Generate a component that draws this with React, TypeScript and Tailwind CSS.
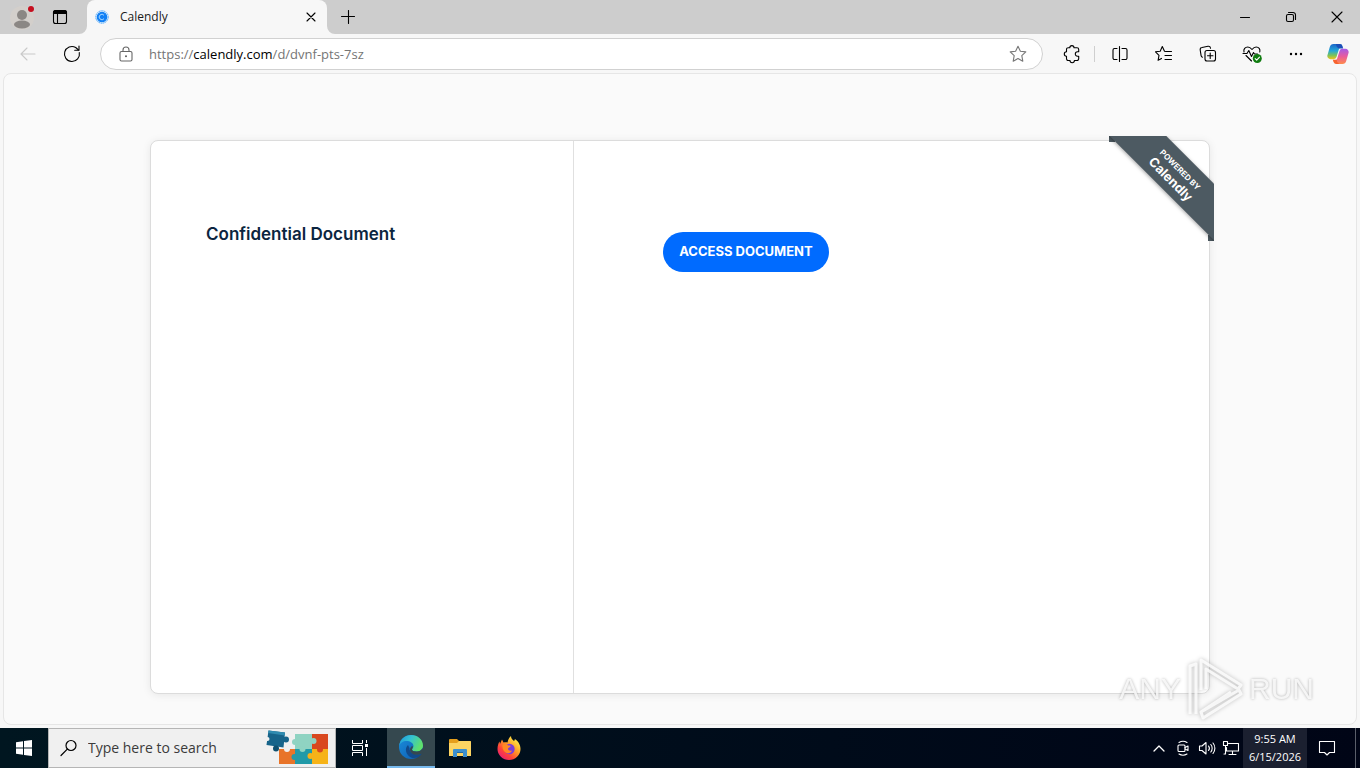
import type { ReactNode } from 'react';

interface IconButtonProps {
  label: string;
  className?: string;
  children: ReactNode;
}

function IconButton({ label, className = 'w-11 h-8', children }: IconButtonProps) {
  return (
    <button type="button" aria-label={label} className={`flex flex-shrink-0 items-center justify-center ${className}`}>
      {children}
    </button>
  );
}

interface LineIconProps {
  size?: number;
  className?: string;
  children: ReactNode;
}

function LineIcon({ size = 20, className = 'text-[#1b1b1b]', children }: LineIconProps) {
  return (
    <svg
      width={size}
      height={size}
      viewBox={`0 0 ${size} ${size}`}
      fill="none"
      stroke="currentColor"
      strokeWidth="1.1"
      strokeLinecap="round"
      strokeLinejoin="round"
      className={className}
      aria-hidden="true"
    >
      {children}
    </svg>
  );
}

function CalendlyIcon() {
  return (
    <svg width="14" height="14" viewBox="0 0 14 14" fill="none" aria-hidden="true">
      <circle cx="7" cy="7" r="6.2" stroke="#4aa8ff" strokeWidth="1" strokeDasharray="1.8 .5" />
      <circle cx="7" cy="7" r="4.6" fill="#1180f5" stroke="#1180f5" strokeWidth="1.4" />
      <path d="M9 5.300A2.700 2.700 0 1 0 9 8.700" stroke="#a8d8ff" strokeWidth="1" />
    </svg>
  );
}

function CopilotIcon() {
  return (
    <svg width="22" height="22" viewBox="0 0 22 22" aria-hidden="true">
      <defs>
        <linearGradient id="copilotLeft" x1="0" y1="0" x2="0" y2="1">
          <stop offset="0" stopColor="#1b66c9" />
          <stop offset=".45" stopColor="#24a8d8" />
          <stop offset=".75" stopColor="#7cc35a" />
          <stop offset="1" stopColor="#f2c41d" />
        </linearGradient>
        <linearGradient id="copilotRight" x1="0" y1="0" x2="0" y2="1">
          <stop offset="0" stopColor="#a45be8" />
          <stop offset=".5" stopColor="#e95b9c" />
          <stop offset="1" stopColor="#ff8b4a" />
        </linearGradient>
      </defs>
      <path
        d="M15.500 3.200A3 3 0 0 0 12.700 1H6.600A4 4 0 0 0 2.800 4L.5 12a3.200 3.200 0 0 0 3 4.200h3.200a3 3 0 0 0 2.800-2.200L11.800 6.500a3 3 0 0 1 2.800-2.200z"
        fill="url(#copilotLeft)"
      />
      <path d="M9 1h3.700a3 3 0 0 1 2.800 2.200l.7 2.300h-4A5 5 0 0 1 9 1z" fill="#1c4fb8" />
      <path
        d="M6.500 18.800A3 3 0 0 0 9.300 21h6.100a4 4 0 0 0 3.800-3l2.300-8a3.200 3.200 0 0 0-3-4.200h-3.200a3 3 0 0 0-2.800 2.200l-2.300 7.500a3 3 0 0 1-2.800 2.200z"
        fill="url(#copilotRight)"
      />
      <path d="M6.500 18.800A3 3 0 0 0 9.300 21h2.900a4.600 4.600 0 0 1-2.500-4.300H5.800z" fill="#f7632f" />
    </svg>
  );
}

function PuzzleArt() {
  return (
    <svg width="64" height="38" viewBox="0 0 64 38" className="flex-shrink-0" aria-hidden="true">
      <path d="M29 5h17v15H29z" fill="#8fd3c2" />
      <path d="M46 5h16v16H46z" fill="#d9481f" />
      <path d="M13 20h17v15H13z" fill="#e87429" />
      <path d="M29 20h17v15H29z" fill="#219aa8" />
      <path d="M46 20h16v15H46z" fill="#f6b318" />
      <circle cx="29" cy="13" r="3" fill="#8fd3c2" />
      <circle cx="47.500" cy="12" r="3" fill="#8fd3c2" />
      <circle cx="36.500" cy="20" r="3" fill="#8fd3c2" />
      <circle cx="54" cy="20.500" r="3" fill="#d9481f" />
      <circle cx="28.500" cy="28" r="3" fill="#219aa8" />
      <circle cx="44.500" cy="27" r="3" fill="#f6b318" />
      <circle cx="21" cy="20" r="3" fill="#f0f0f0" />
      <path d="M2.500 1.500L19 3.500l-1.500 15L.5 16z" fill="#17648a" />
      <path d="M2.500 1.500L19 3.500l-.3 3L2.200 4z" fill="#2f8bb0" />
      <circle cx="20" cy="10.500" r="3" fill="#17648a" />
      <circle cx="10" cy="19.500" r="3" fill="#10506f" />
      <circle cx="1.500" cy="10" r="2" fill="#f0f0f0" />
    </svg>
  );
}

function EdgeIcon() {
  return (
    <svg width="26" height="26" viewBox="0 0 26 26" aria-hidden="true">
      <defs>
        <linearGradient id="edgeTop" x1="0" y1="0" x2="1" y2=".4">
          <stop offset="0" stopColor="#1c95dc" />
          <stop offset=".5" stopColor="#35c2d0" />
          <stop offset="1" stopColor="#5fe06c" />
        </linearGradient>
        <linearGradient id="edgeBottom" x1="0" y1="0" x2="1" y2="1">
          <stop offset="0" stopColor="#1b8edb" />
          <stop offset="1" stopColor="#0b5ab0" />
        </linearGradient>
      </defs>
      <circle cx="13" cy="13" r="12" fill="url(#edgeBottom)" />
      <path d="M10 11c-5 5 0 13 6 13 3 0 6-1.500 8-4.500-6 3-13-.5-12.500-5.500z" fill="#114a8b" />
      <path d="M1.200 12C2 5 7 1 13 1c7 0 12 5 12 10.500 0 4-3 6-6.500 6-3 0-4.500-1-4.500-2s1.500-1.500 1.500-3.500C15.500 9 12 7 8.500 7 5 7 2 9 1.200 12z" fill="url(#edgeTop)" />
      <path d="M14 15.500c0 1 1.500 2 4.500 2 2.500 0 5-1 6-3.500l1 4-1.500 1.500c-6 3-12 .5-12-4 0-1.500 1-3 2.500-3.500 1 1.500-.5 2.500-.5 3.500z" fill="#35484f" />
    </svg>
  );
}

function FolderIcon() {
  return (
    <svg width="22" height="20" viewBox="0 0 22 20" aria-hidden="true">
      <path d="M0 2a1 1 0 0 1 1-1h7l2 2h11a1 1 0 0 1 1 1v13H0z" fill="#e59f1c" />
      <path d="M0 5h8l2-2h11a1 1 0 0 1 1 1v14H0z" fill="#fcd462" />
      <path d="M4 19v-7a1 1 0 0 1 1-1h12a1 1 0 0 1 1 1v7h-4v-4H8v4z" fill="#3b8fce" />
      <path d="M8 14h6v1H8z" fill="#2269a0" />
    </svg>
  );
}

function FirefoxIcon() {
  return (
    <svg width="24" height="24" viewBox="0 0 24 24" aria-hidden="true">
      <defs>
        <linearGradient id="foxBody" x1=".85" y1=".1" x2=".15" y2=".95">
          <stop offset="0" stopColor="#fff04a" />
          <stop offset=".4" stopColor="#ff9a26" />
          <stop offset=".7" stopColor="#ff4438" />
          <stop offset="1" stopColor="#e61c78" />
        </linearGradient>
      </defs>
      <path
        d="M14 0c0 2.500 1.500 3.500 3 5 .8-.8.8-1.500.8-2C21 5 23.500 8.500 23.500 13A11.500 11 0 0 1 12 24 11.500 11 0 0 1 .5 13c0-3 .8-5.500 2-7.500L3 8l2-4.500 1.500 3C8 6 9.500 6 10.500 6.500 11 4 12 1.500 14 0z"
        fill="url(#foxBody)"
      />
      <circle cx="12.500" cy="13" r="5.200" fill="#7a3ddb" />
      <path d="M5.500 9c2-1.500 4.500-1 5.500.5 1.500 0 2.500 0 2.500.8 0 1-2 1.200-2.500 2.200-.3 1.800 2 3 4 2-.5 2-3 3.500-5.500 2.500C7 16 5 13 5.500 9z" fill="#ff8a24" />
    </svg>
  );
}

function TitleBar() {
  return (
    <header className="flex h-[34px] flex-shrink-0 items-end bg-[#cdcdcd]">
      <div className="flex h-[34px] items-center pl-[3px]">
        <IconButton label="Profile" className="h-8 w-[38px]">
          <svg width="26" height="26" viewBox="0 0 26 26" aria-hidden="true">
            <circle cx="13" cy="14" r="12" fill="#d3cfcb" />
            <circle cx="13" cy="11" r="5" fill="#8b8784" />
            <ellipse cx="13" cy="20.500" rx="8" ry="4" fill="#8b8784" />
            <circle cx="22" cy="5" r="3.500" fill="#d2d2d2" />
            <circle cx="22" cy="5" r="3" fill="#c50f1f" />
          </svg>
        </IconButton>
        <IconButton label="Tab actions" className="h-8 w-[38px]">
          <LineIcon size={16} className="text-black">
            <rect x="1.500" y="1.500" width="13" height="13" rx="2" />
            <path d="M1.500 3.500a2 2 0 0 1 2-2h9a2 2 0 0 1 2 2V4.500h-13z" fill="currentColor" />
            <path d="M5.500 5v9.500" />
          </LineIcon>
        </IconButton>
      </div>
      <svg width="8" height="8" viewBox="0 0 8 8" className="flex-shrink-0" aria-hidden="true">
        <path d="M8 0v8H0a8 8 0 0 0 8-8z" fill="#f7f7f7" />
      </svg>
      <div className="flex h-[34px] w-[240px] items-center rounded-t-lg bg-[#f7f7f7] pl-2">
        <CalendlyIcon />
        <span className="ml-[11px] flex-1 text-xs text-[#1b1b1b]">Calendly</span>
        <IconButton label="Close tab" className="h-8 w-8">
          <LineIcon size={10} className="text-black">
            <path d="M1 1l8 8M9 1L1 9" />
          </LineIcon>
        </IconButton>
      </div>
      <svg width="8" height="8" viewBox="0 0 8 8" className="flex-shrink-0" aria-hidden="true">
        <path d="M0 0v8h8a8 8 0 0 1-8-8z" fill="#f7f7f7" />
      </svg>
      <IconButton label="New tab" className="h-[34px] w-[26px]">
        <LineIcon size={14} className="text-black">
          <path d="M7.500 .5v13M.5 6.500h13" />
        </LineIcon>
      </IconButton>
      <div className="ml-auto flex h-[34px]">
        <IconButton label="Minimize" className="h-[34px] w-[46px]">
          <LineIcon size={10} className="text-black">
            <path d="M.5 5.500h9" />
          </LineIcon>
        </IconButton>
        <IconButton label="Restore" className="h-[34px] w-[46px]">
          <LineIcon size={12} className="text-black">
            <rect x="1.500" y="3.500" width="7" height="7" rx="1.500" />
            <path d="M3.500 1.500h4.500a2.500 2.500 0 0 1 2.500 2.500v4.500" />
          </LineIcon>
        </IconButton>
        <IconButton label="Close" className="h-[34px] w-[46px]">
          <LineIcon size={12} className="text-black">
            <path d="M1 1l10 10M11 1L1 11" />
          </LineIcon>
        </IconButton>
      </div>
    </header>
  );
}

function Toolbar() {
  return (
    <div className="flex h-[39px] flex-shrink-0 items-center pl-[6px] pr-[2px]">
      <IconButton label="Back">
        <LineIcon className="text-[#c9c9c9]">
          <path d="M17 10H3M9 4l-6 6 6 6" />
        </LineIcon>
      </IconButton>
      <IconButton label="Refresh">
        <LineIcon className="text-black">
          <path d="M17.300 8.500A7.500 7.500 0 1 1 13.700 3.500L16.500 6" />
          <path d="M17 2v4.300h-4.300" />
        </LineIcon>
      </IconButton>
      <div className="ml-[6px] flex h-8 flex-1 items-center rounded-full border border-[#d1d1d1] bg-white pl-[17px]">
        <LineIcon size={16} className="flex-shrink-0 text-[#666]">
          <rect x="2" y="5.500" width="12" height="9.500" rx="1.500" />
          <path d="M5 5.500V4a3 3 0 0 1 6 0v1.500" />
          <circle cx="8" cy="10.200" r=".5" fill="currentColor" />
        </LineIcon>
        <div className="relative ml-[15px] flex-1 text-[13px] leading-5">
          <input
            type="text"
            aria-label="Address and search bar"
            defaultValue="https://calendly.com/d/dvnf-pts-7sz"
            className="peer block w-full bg-transparent text-transparent outline-none focus:text-black"
          />
          <span aria-hidden="true" className="pointer-events-none absolute inset-0 whitespace-nowrap text-[#757575] peer-focus:hidden">
            https://<span className="text-black">calendly.com</span>/d/dvnf-pts-7sz
          </span>
        </div>
        <IconButton label="Add to favorites" className="mr-[8px] h-8 w-8">
          <LineIcon className="text-[#777]">
            <path d="M10 2.200l2.400 5 5.400.7-4 3.800 1 5.500-4.800-2.700-4.800 2.700 1-5.500-4-3.800 5.400-.7z" />
          </LineIcon>
        </IconButton>
      </div>
      <IconButton label="Extensions" className="ml-[7px] h-8 w-11">
        <LineIcon className="text-black">
          <path
            d="M6.200 3.700h1.600a2.100 2.100 0 0 1 4.200 0h3a1.700 1.700 0 0 1 1.700 1.700v2.400h-1.200a2.200 2.200 0 0 0 0 4.400h1.200v2.600a1.700 1.700 0 0 1-1.700 1.700h-2.600a2.200 2.200 0 0 1-4.400 0H6.200a1.700 1.700 0 0 1-1.700-1.700v-2.600a2.200 2.200 0 0 1 0-4.400V5.400a1.700 1.700 0 0 1 1.700-1.700z"
          />
        </LineIcon>
      </IconButton>
      <span className="mr-[3px] h-4 w-px bg-[#cfcfcf]" />
      <IconButton label="Split screen">
        <LineIcon className="text-black">
          <path d="M7 4.500H4.500a1.500 1.500 0 0 0-1.500 1.500v8a1.500 1.500 0 0 0 1.500 1.500H7M12 4.500h3.500a1.500 1.500 0 0 1 1.500 1.500v8a1.500 1.500 0 0 1-1.500 1.500H12M9.500 2.500v15" />
        </LineIcon>
      </IconButton>
      <IconButton label="Favorites">
        <LineIcon className="text-black">
          <path d="M12 7.500L10.500 7.200 8.300 2.500 6.200 7.200l-4.700.6 3.500 3.500-.9 5 3.400-1.900M12 7.500h5.500M11 11.500h6.500M11 15.500h6.500" />
        </LineIcon>
      </IconButton>
      <IconButton label="Collections">
        <LineIcon className="text-black">
          <rect x="7" y="6.500" width="10.500" height="10.500" rx="2" />
          <path d="M4.500 13.200a2 2 0 0 1-1.400-1.600L2.200 6a2.200 2.200 0 0 1 1.800-2.500l6-1.200a2.200 2.200 0 0 1 2.500 1.800v.2" />
          <path d="M12.200 9v5.500M9.500 11.700h5.500" />
        </LineIcon>
      </IconButton>
      <IconButton label="Browser essentials">
        <LineIcon className="text-black">
          <path d="M2 8c-.8-3 1.300-5 3.800-5 1.800 0 3 1 4.200 2.500C11.200 4 12.400 3 14.200 3c2.500 0 4.300 2 3.600 5M9.500 17L4 11.500" />
          <path d="M1 9.500h4l1.800-3 2.700 6 2-4 1 1.500h3" />
          <circle cx="15.300" cy="14.500" r="4.500" fill="#107c10" stroke="none" />
          <path d="M13.200 14.700l1.500 1.500 2.800-3" stroke="white" />
        </LineIcon>
      </IconButton>
      <IconButton label="Settings and more">
        <svg width="16" height="4" viewBox="0 0 16 4" aria-hidden="true">
          <circle cx="3" cy="2" r="1.200" />
          <circle cx="8" cy="2" r="1.200" />
          <circle cx="13" cy="2" r="1.200" />
        </svg>
      </IconButton>
      <IconButton label="Copilot" className="h-8 w-10">
        <CopilotIcon />
      </IconButton>
    </div>
  );
}

function PoweredByRibbon() {
  return (
    <a href="#calendly" className="absolute -right-[5px] -top-[5px] block size-[105px] overflow-hidden">
      <span className="absolute left-0 top-0 size-[6px] bg-[#4d5a62]" />
      <span className="absolute bottom-0 right-0 size-[6px] bg-[#4d5a62]" />
      <span className="absolute -left-[13px] top-[18px] flex h-10 w-40 rotate-45 flex-col items-center justify-center bg-[#4d5a62] pt-1 font-bold text-white shadow-[0_1px_4px_rgba(0,0,0,0.35)]">
        <span className="text-[8px] leading-[10px]">POWERED BY</span>
        <span className="text-[13px] leading-4">Calendly</span>
      </span>
    </a>
  );
}

function EventPage() {
  return (
    <main className="mx-[3px] mb-[3px] flex flex-1 flex-col rounded-lg border border-[#e6e6e6] bg-[#fafafa] px-4 pb-[30px] pt-[66px] font-[Inter,'Liberation_Sans',sans-serif]">
      <div className="relative mx-auto flex w-full max-w-[1060px] flex-1 rounded-lg border border-[#dcdcdc] bg-white shadow-[0_1px_8px_rgba(0,0,0,0.08)]">
        <section className="w-2/5 border-r border-[#e0e0e0] px-[55px] pt-[81px]">
          <h1 className="text-[17px] font-semibold leading-6 text-[#0b2540]">Confidential Document</h1>
        </section>
        <section className="flex-1 pl-[89px] pt-[91px]">
          <button type="button" className="h-10 rounded-full bg-[#006bff] px-4 text-[13px] font-bold text-white">
            ACCESS DOCUMENT
          </button>
        </section>
        <PoweredByRibbon />
      </div>
    </main>
  );
}

function Watermark() {
  return (
    <div className="pointer-events-none fixed bottom-[46px] right-[46px] flex items-center gap-1 font-['Liberation_Sans',sans-serif] text-3xl text-white/80 [text-shadow:0_0_3px_rgba(0,0,0,0.3)]">
      <span>ANY</span>
      <svg width="60" height="66" viewBox="0 0 60 66" fill="none" strokeLinejoin="round" aria-hidden="true" className="drop-shadow-[0_0_2px_rgba(0,0,0,0.3)]">
        <path d="M5 58V10l6-2v50M16 34V4l40 25-3 4-32-20v20M16 56l38-22 2 4-38 24-2-6 30-20" stroke="white" strokeWidth="3" strokeOpacity=".8" />
      </svg>
      <span>RUN</span>
    </div>
  );
}

function Taskbar() {
  return (
    <footer className="flex h-10 flex-shrink-0 items-stretch bg-linear-to-r from-[#001620] to-[#000516] text-white">
      <IconButton label="Start" className="w-12">
        <svg width="16" height="16" viewBox="0 0 16 16" fill="white" aria-hidden="true">
          <path d="M0 2.200L7 1.200v6.300H0zM8 1.100L16 0v7.500H8zM0 8.500h7v6.300L0 13.800zM8 8.500h8V16l-8-1.100z" />
        </svg>
      </IconButton>
      <label className="flex w-72 items-center border border-[#b5b5b5] bg-[#f0f0f0] pl-[11px] pr-[5px]">
        <LineIcon size={18} className="flex-shrink-0 text-black">
          <circle cx="11" cy="6.500" r="5" strokeWidth="1.200" />
          <path d="M7.300 10.200L1 16.500" strokeWidth="1.200" />
        </LineIcon>
        <input
          type="text"
          aria-label="Search"
          placeholder="Type here to search"
          className="ml-[10px] w-full min-w-0 flex-1 bg-transparent text-sm text-black outline-none placeholder:text-[#3b3b3b]"
        />
        <PuzzleArt />
      </label>
      <IconButton label="Task view" className="w-12">
        <svg width="18" height="16" viewBox="0 0 18 16" fill="none" stroke="white" aria-hidden="true">
          <path d="M1.500 0v3.500h10V0M1.500 5.500h10v5h-10zM1.500 16v-3.500h10V16M15.500 0v3M15.500 8v8" />
          <path d="M14 4h3v3h-3z" fill="white" stroke="none" />
        </svg>
      </IconButton>
      <IconButton label="Microsoft Edge" className="ml-[3px] w-12 border-b-2 border-[#76b9ed] bg-[#35484f]">
        <EdgeIcon />
      </IconButton>
      <IconButton label="File Explorer" className="w-[50px]">
        <FolderIcon />
      </IconButton>
      <IconButton label="Firefox" className="w-12">
        <FirefoxIcon />
      </IconButton>
      <div className="ml-auto flex">
        <IconButton label="Show hidden icons" className="w-6">
          <LineIcon size={14} className="text-white">
            <path d="M2 10l5-5 5 5" strokeWidth="1.300" />
          </LineIcon>
        </IconButton>
        <IconButton label="Meet Now" className="w-6">
          <LineIcon size={16} className="text-white">
            <rect x="3" y="5" width="7" height="6.500" rx="1" />
            <path d="M10 7.500l3-1.500v4.500l-3-1.500M4 2.500c2.500-1.500 5.500-1.500 8 0M4 14c2.500 1.500 5.500 1.500 8 0" />
          </LineIcon>
        </IconButton>
        <IconButton label="Volume" className="w-6">
          <LineIcon size={18} className="text-white">
            <path d="M1.500 7v4.500h2.500l4 3.500V3.500L4 7zM10.500 7c1 1.200 1 3.300 0 4.500M12.800 5.500c1.800 2 1.800 5.500 0 7.500M15 4c2.500 3 2.500 7.500 0 10.500" />
          </LineIcon>
        </IconButton>
        <IconButton label="Network" className="w-6">
          <LineIcon size={18} className="text-white">
            <path d="M6.500 4.500h10v7.500h-12V8.500M10.500 12v3M7 15.500h7M1.500 2.500h4v4h-4zM3.500 6.500v8.500H2" />
          </LineIcon>
        </IconButton>
        <button type="button" className="w-16 bg-[#1b2030] text-center text-[11px] leading-[18px]">
          <time className="block">9:55 AM</time>
          <span className="block">6/15/2026</span>
        </button>
        <IconButton label="Notifications" className="w-10">
          <LineIcon size={18} className="text-white">
            <path d="M1.500 2.500h15v11h-5L9 16l-2.500-2.500h-5z" />
          </LineIcon>
        </IconButton>
        <button type="button" aria-label="Show desktop" className="ml-2 w-[5px] border-l border-[#5a5f6a]" />
      </div>
    </footer>
  );
}

export default function App() {
  return (
    <div className="flex min-h-screen flex-col bg-[#f7f7f7] font-['Open_Sans','Noto_Sans',sans-serif]">
      <TitleBar />
      <Toolbar />
      <EventPage />
      <Taskbar />
      <Watermark />
    </div>
  );
}
